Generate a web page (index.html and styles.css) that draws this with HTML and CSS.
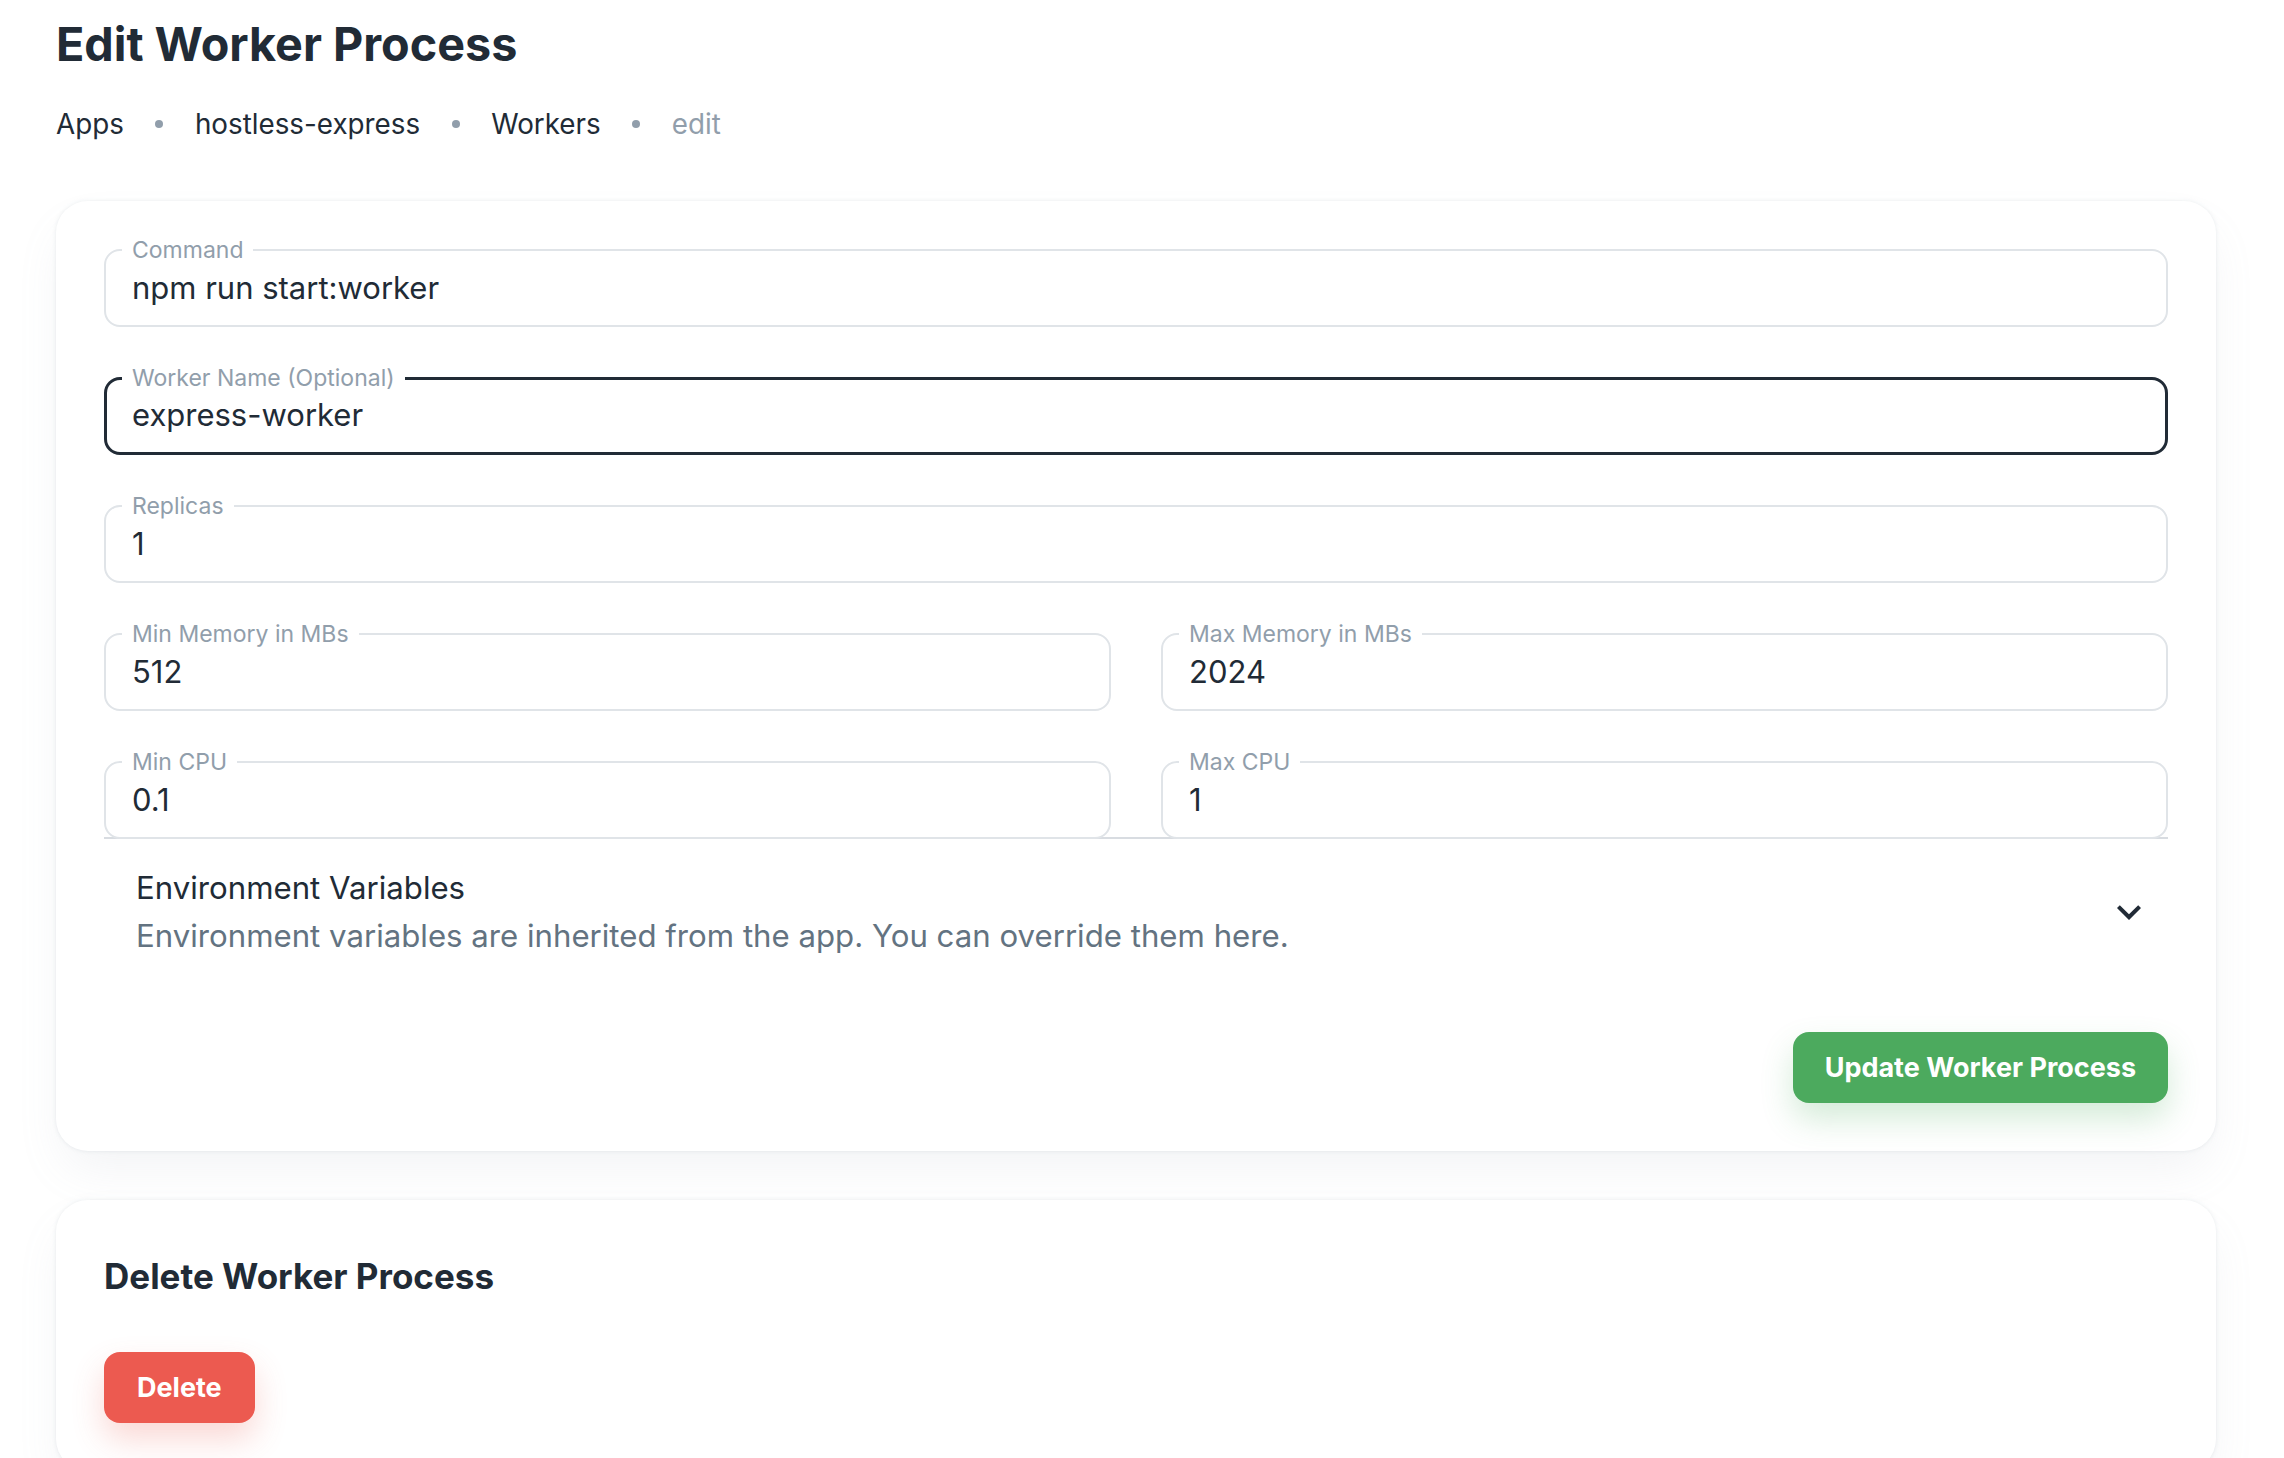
FILE: index.html
```html
<!DOCTYPE html>
<html lang="en">
<head>
  <meta charset="UTF-8">
  <meta name="viewport" content="width=device-width, initial-scale=1.0">
  <title>Edit Worker Process</title>
  <link rel="stylesheet" href="styles.css">
</head>
<body>
  <div class="page">
    <h1 class="page-title">Edit Worker Process</h1>

    <!-- Breadcrumbs -->
    <nav class="breadcrumbs">
      <a href="#">Apps</a>
      <span class="separator"></span>
      <a href="#">hostless-express</a>
      <span class="separator"></span>
      <a href="#">Workers</a>
      <span class="separator"></span>
      <span class="current">edit</span>
    </nav>

    <!-- Edit Form -->
    <div class="card">
      <form id="workerForm">
        <div class="fields">
          <fieldset class="field">
            <legend>Command</legend>
            <input type="text" name="command" value="npm run start:worker">
          </fieldset>

          <fieldset class="field focused">
            <legend>Worker Name (Optional)</legend>
            <input type="text" name="name" value="express-worker">
          </fieldset>

          <fieldset class="field">
            <legend>Replicas</legend>
            <input type="text" name="replicas" value="1">
          </fieldset>

          <div class="field-row">
            <fieldset class="field">
              <legend>Min Memory in MBs</legend>
              <input type="text" name="minMemory" value="512">
            </fieldset>
            <fieldset class="field">
              <legend>Max Memory in MBs</legend>
              <input type="text" name="maxMemory" value="2024">
            </fieldset>
          </div>

          <div class="field-row">
            <fieldset class="field">
              <legend>Min CPU</legend>
              <input type="text" name="minCpu" value="0.1">
            </fieldset>
            <fieldset class="field">
              <legend>Max CPU</legend>
              <input type="text" name="maxCpu" value="1">
            </fieldset>
          </div>
        </div>

        <!-- Environment Variables -->
        <div class="accordion">
          <div class="accordion-summary">
            <div>
              <p class="accordion-title">Environment Variables</p>
              <p class="accordion-subtitle">Environment variables are inherited from the app. You can override them here.</p>
            </div>
            <svg class="expand-icon" viewBox="0 0 24 24"><path d="M16.59 8.59 12 13.17 7.41 8.59 6 10l6 6 6-6z"/></svg>
          </div>
        </div>

        <div class="actions">
          <button type="submit" class="btn btn-success">Update Worker Process</button>
        </div>
      </form>
    </div>

    <!-- Delete -->
    <div class="card danger-card">
      <h2 class="card-title">Delete Worker Process</h2>
      <button type="button" class="btn btn-error">Delete</button>
    </div>
  </div>
</body>
</html>
```

FILE: styles.css
```css
/* General Styles */
* {
  box-sizing: border-box;
}

body {
  margin: 0;
  font-family: Inter, "Noto Sans", sans-serif;
  color: #212b36; /* Dark text */
  background-color: #ffffff;
  overflow: hidden;
}

.page {
  padding: 8px 68px 0 56px;
}

.page-title {
  margin: 0;
  font-size: 46.7px;
  line-height: 72px;
  font-weight: 700;
}

/* Breadcrumbs */
.breadcrumbs {
  display: flex;
  align-items: center;
  margin-top: 23px;
  font-size: 27.8px;
  line-height: 42px;
}

.breadcrumbs a {
  color: #212b36;
  text-decoration: none;
}

.breadcrumbs .current {
  color: #919eab; /* Grey for current page */
}

.separator {
  width: 8px;
  height: 8px;
  margin: 0 31.5px;
  border-radius: 50%;
  background-color: #919eab;
}

/* Cards */
.card {
  margin-top: 56px;
  padding: 37px 48px 48px;
  background-color: #ffffff;
  border-radius: 32px;
  box-shadow: 0 0 4px rgba(145, 158, 171, 0.2), 0 24px 48px -8px rgba(145, 158, 171, 0.12);
}

.danger-card {
  margin-top: 49px;
  padding-top: 49px;
}

.card-title {
  margin: 0 0 49px;
  font-size: 35px;
  line-height: 54px;
  font-weight: 700;
}

/* Form Styles */
.fields {
  display: flex;
  flex-direction: column;
  gap: 39px;
}

.field-row {
  display: grid;
  grid-template-columns: 1fr 1fr;
  gap: 50px;
}

.field {
  margin: 0;
  min-width: 0;
  padding: 0 26px;
  border: 2px solid #e0e4e8; /* Light grey border */
  border-radius: 16px;
}

.field legend {
  margin-left: -10px;
  padding: 0 10px;
  font-size: 23px;
  line-height: 24px;
  color: #919eab;
}

.field input {
  display: block;
  width: 100%;
  height: 63px;
  padding: 6px 0 19px;
  border: none;
  outline: none;
  background: transparent;
  font-family: inherit;
  font-size: 31px;
  line-height: 38px;
  color: #212b36;
}

.field.focused {
  padding: 0 25px;
  border: 3px solid #212b36; /* Dark border when focused */
}

.field.focused input {
  height: 62px;
}

/* Accordion */
.accordion {
  margin-top: -2px;
  border-top: 2px solid #d8dce1;
}

.accordion-summary {
  display: flex;
  align-items: center;
  justify-content: space-between;
  padding: 25px 15px 23px 32px;
  cursor: pointer;
}

.accordion-title,
.accordion-subtitle {
  margin: 0;
  font-size: 31.2px;
  line-height: 48px;
}

.accordion-subtitle {
  color: #637381; /* Muted text */
}

.expand-icon {
  width: 48px;
  height: 48px;
  fill: #212b36;
}

/* Buttons */
.actions {
  display: flex;
  justify-content: flex-end;
  margin-top: 49px;
}

.btn {
  height: 71px;
  padding: 0 32px;
  border: none;
  border-radius: 16px;
  font-family: inherit;
  font-size: 27px;
  font-weight: 700;
  color: #ffffff;
  cursor: pointer;
}

.btn-success {
  background-color: #4caa5e; /* Green button */
  box-shadow: 0 16px 32px rgba(76, 170, 94, 0.24);
}

.btn-error {
  padding: 0 33px;
  background-color: #ec5a50; /* Red button */
  box-shadow: 0 16px 32px rgba(236, 90, 80, 0.24);
}
```
